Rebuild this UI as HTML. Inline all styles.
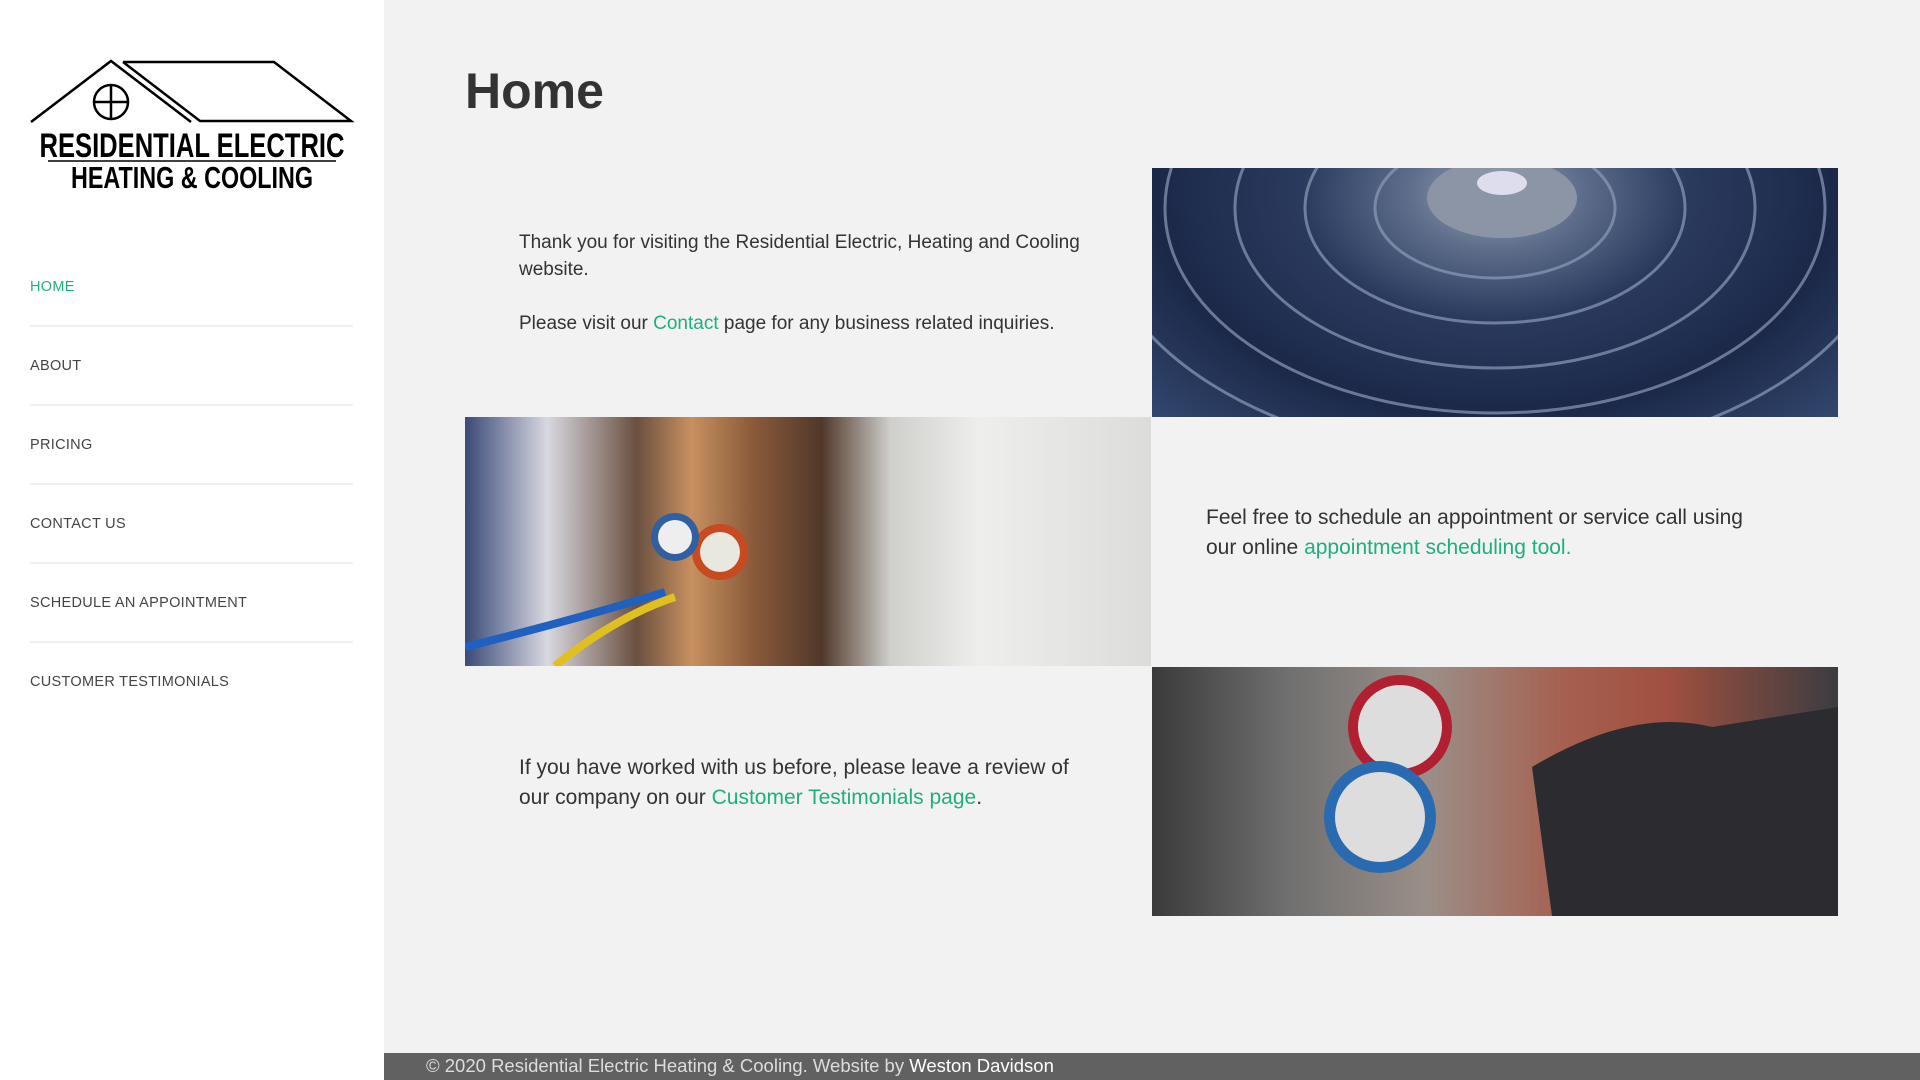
<!DOCTYPE html>
<html><head><meta charset="utf-8"><style>
*{margin:0;padding:0;box-sizing:border-box}
body{width:1920px;height:1080px;overflow:hidden;background:#f2f2f2;font-family:"Liberation Sans",sans-serif;position:relative}
.side{position:absolute;left:0;top:0;width:384px;height:1080px;background:#fff}
.nav{position:absolute;left:30px;top:248px;width:323px}
.nav div{height:79px;border-bottom:2px solid #f0f0f0;font-size:14.5px;color:#444;padding-top:31px;letter-spacing:0.3px}
.nav div:last-child{border-bottom:none}
.nav .on{color:#1fae82}
h1{position:absolute;left:465px;top:62px;font-size:50px;font-weight:bold;color:#333}
.t{position:absolute;color:#333;font-size:19px;line-height:27px}
a{color:#1fae82;text-decoration:none}
.img{position:absolute;width:686px;height:249px;overflow:hidden}
.foot{position:absolute;left:384px;top:1053px;width:1536px;height:27px;background:#616161;color:#ddd;font-size:18.5px;padding:2px 0 0 42px}
.foot b{color:#fff;font-weight:normal}
</style></head><body>
<div class="side">
<svg width="384" height="160" style="position:absolute;left:0;top:40px" viewBox="0 0 384 160">
<g fill="none" stroke="#000" stroke-width="2.5">
<polyline points="31,82 111,21 191,82"/>
<polyline points="123,22 274,22 351,81 200,81 123,22"/>
<circle cx="111" cy="62" r="17"/>
<line x1="111" y1="45" x2="111" y2="79"/><line x1="94" y1="62" x2="128" y2="62"/>
<line x1="48" y1="121" x2="336" y2="121" stroke-width="1.5"/>
</g>
<text x="192" y="117" text-anchor="middle" font-family="Liberation Sans Narrow, Liberation Sans, sans-serif" font-weight="bold" font-size="34" textLength="305" lengthAdjust="spacingAndGlyphs">RESIDENTIAL ELECTRIC</text>
<text x="192" y="148" text-anchor="middle" font-family="Liberation Sans Narrow, Liberation Sans, sans-serif" font-weight="bold" font-size="31" textLength="242" lengthAdjust="spacingAndGlyphs">HEATING &amp; COOLING</text>
</svg>
<div class="nav">
<div class="on">HOME</div><div>ABOUT</div><div>PRICING</div><div>CONTACT US</div><div>SCHEDULE AN APPOINTMENT</div><div>CUSTOMER TESTIMONIALS</div>
</div>
</div>
<h1>Home</h1>
<div class="t" style="left:519px;top:229px;width:570px">Thank you for visiting the Residential Electric, Heating and Cooling website.<br><br>Please visit our <a>Contact</a> page for any business related inquiries.</div>
<div class="t" style="left:1206px;top:503px;width:545px;font-size:21px;line-height:30px">Feel free to schedule an appointment or service call using our online <a>appointment scheduling tool.</a></div>
<div class="t" style="left:519px;top:753px;width:580px;font-size:21px;line-height:30px">If you have worked with us before, please leave a review of our company on our <a>Customer Testimonials page</a>.</div>

<div class="img" style="left:1152px;top:168px;background:radial-gradient(ellipse at 50% 10%,#9aa6b8 0,#5d6d8a 18%,#2a3a5e 40%,#1b2848 70%,#33476e 100%)">
<svg width="686" height="249"><g fill="none" stroke="#8c9bb8" stroke-width="3" opacity=".7">
<ellipse cx="343" cy="40" rx="120" ry="70"/><ellipse cx="343" cy="40" rx="190" ry="115"/><ellipse cx="343" cy="40" rx="260" ry="160"/><ellipse cx="343" cy="40" rx="330" ry="205"/><ellipse cx="343" cy="40" rx="400" ry="250"/></g>
<ellipse cx="350" cy="30" rx="75" ry="40" fill="#8b95a6"/><ellipse cx="350" cy="15" rx="25" ry="12" fill="#dde"/></svg></div>

<div class="img" style="left:465px;top:417px;background:linear-gradient(90deg,#3a4a78 0,#d8d8e0 12%,#6a5040 25%,#c79060 33%,#8a5a3a 42%,#50382a 52%,#cfcfcc 62%,#eeeeec 75%,#dcdcda 100%)">
<svg width="686" height="249"><circle cx="255" cy="135" r="28" fill="#c84a20"/><circle cx="255" cy="135" r="20" fill="#e8e8e0"/><circle cx="210" cy="120" r="24" fill="#3060a0"/><circle cx="210" cy="120" r="17" fill="#eee"/><path d="M0 230 Q120 200 200 175" stroke="#2060c0" stroke-width="8" fill="none"/><path d="M90 249 Q150 200 210 180" stroke="#e0c020" stroke-width="8" fill="none"/></svg></div>

<div class="img" style="left:1152px;top:667px;background:linear-gradient(90deg,#3a3a3a 0,#707070 20%,#9a8f88 40%,#a66050 60%,#a05040 75%,#3c3c40 100%)">
<svg width="686" height="249"><circle cx="248" cy="60" r="52" fill="#b02030"/><circle cx="248" cy="60" r="42" fill="#ddd"/><circle cx="228" cy="150" r="56" fill="#2a6ab0"/><circle cx="228" cy="150" r="45" fill="#ddd"/><path d="M380 100 Q480 40 560 60 L686 40 L686 249 L400 249 Z" fill="#2c2c30"/></svg></div>

<div class="foot">© 2020 Residential Electric Heating &amp; Cooling. Website by <b>Weston Davidson</b></div>
</body></html>
